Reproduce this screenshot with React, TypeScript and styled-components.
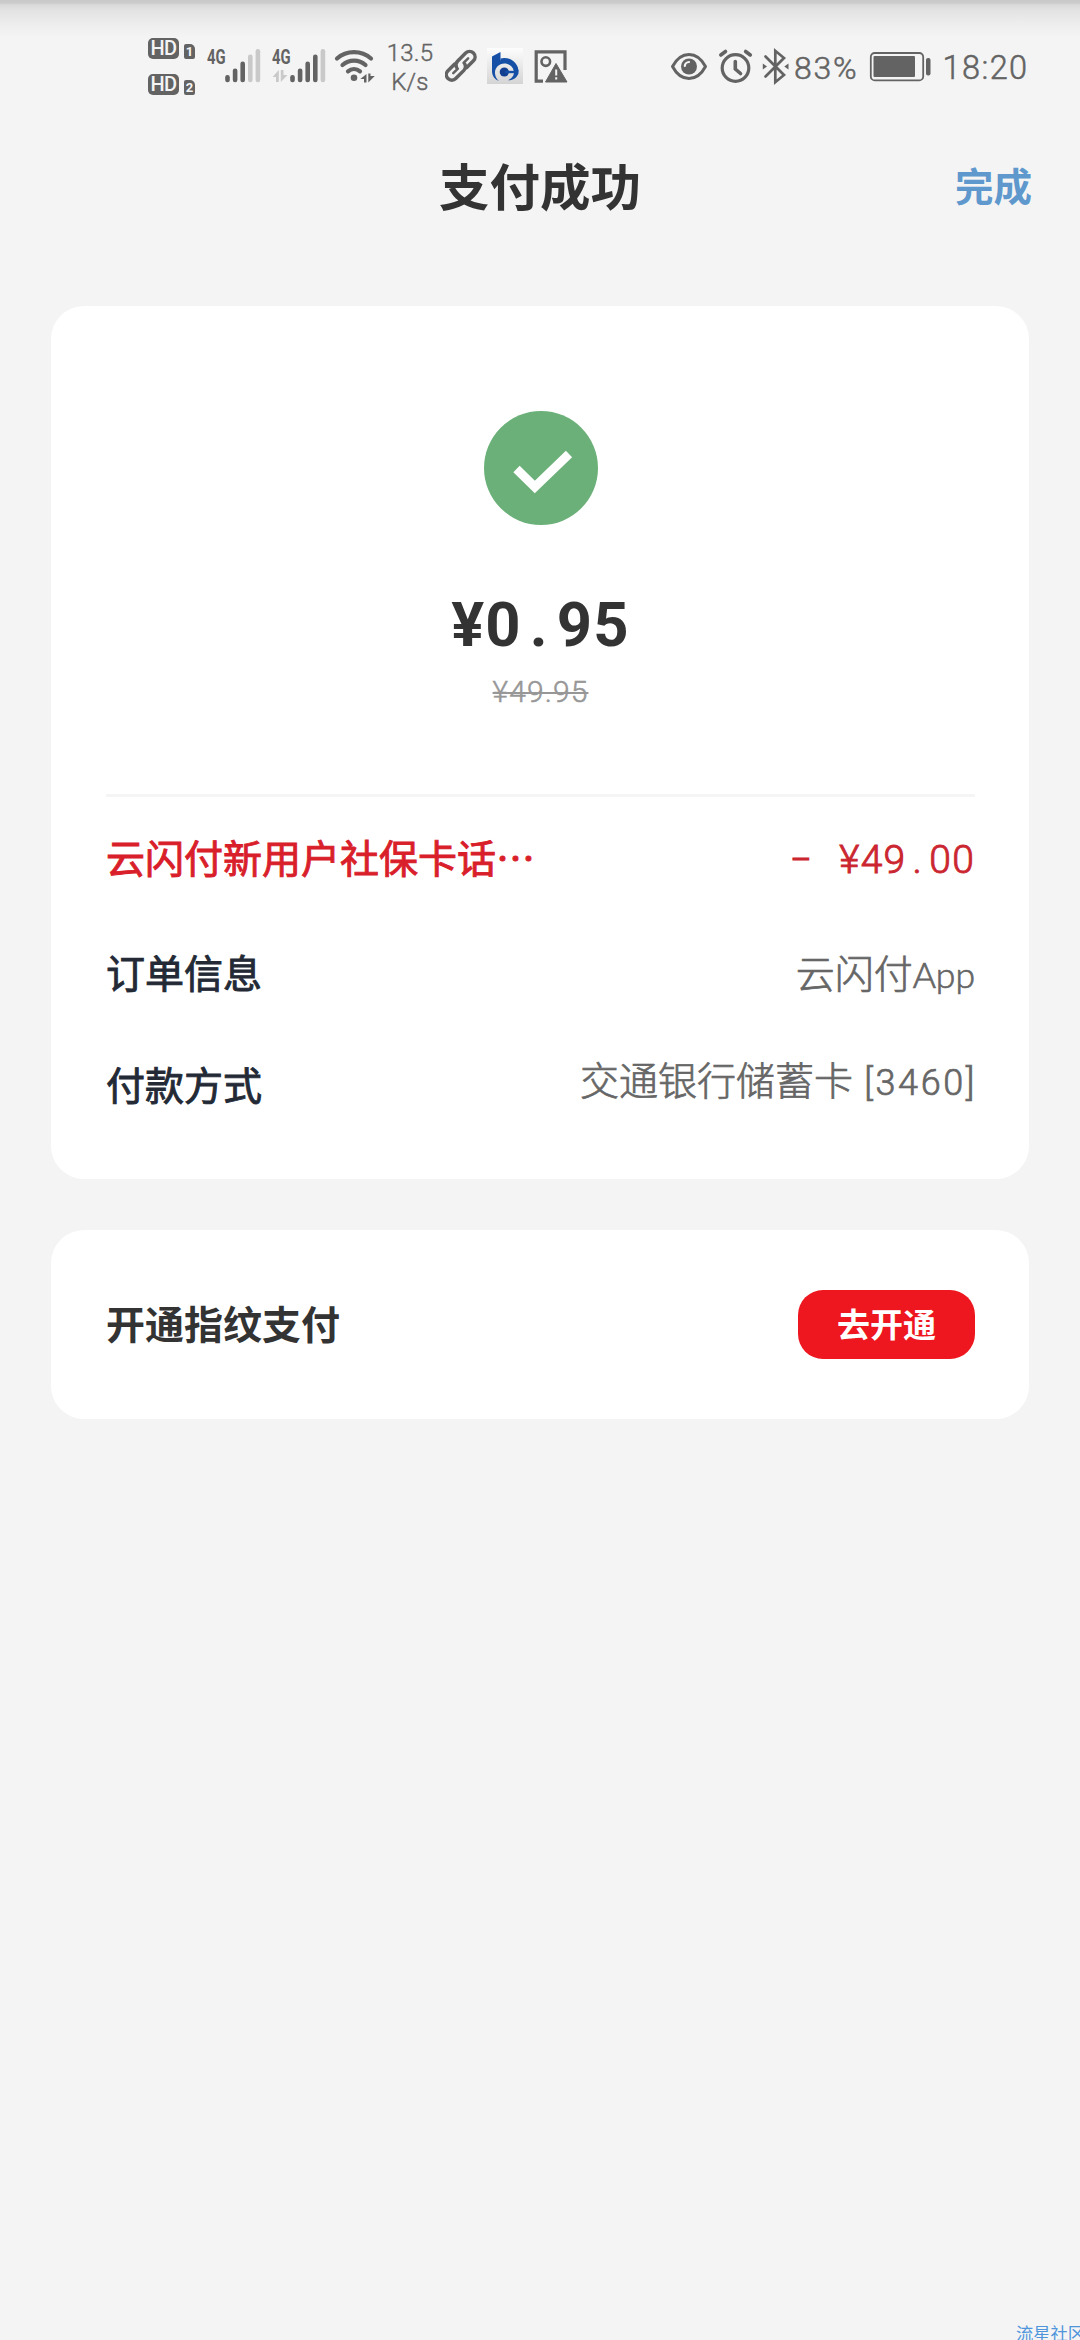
import React from "react";
import styled, { createGlobalStyle } from "styled-components";

const INK = "#636363";
const FAINT = "#c9c9c9";

const GlobalStyle = createGlobalStyle`
  * { box-sizing: border-box; }
  body {
    margin: 0;
    background: #f4f4f4;
    font-family: "Noto Sans CJK SC", "Noto Sans", sans-serif;
  }
`;

const Page = styled.div`
  display: flex;
  flex-direction: column;
  width: 1080px;
  height: 2340px;
  overflow: hidden;
  background: #f4f4f4;
`;

/* ---------- status bar ---------- */

const StatusBar = styled.div`
  display: flex;
  flex: none;
  height: 110px;
  padding-left: 148px;
  color: ${INK};
  font-family: Roboto, sans-serif;
  background: linear-gradient(
    #c9c9c9 0px, #cccccc 3px, #dadada 5px, #e3e3e3 11px, #e9e9e9 18px, #efefef 27px, #f4f4f4 37px
  );
`;

const HdStack = styled.div`
  display: flex;
  flex-direction: column;
  gap: 15px;
  padding-top: 38px;
`;

const HdRow = styled.div`
  display: flex;
  align-items: flex-end;
  gap: 5px;
  height: 21px;
`;

const HdBadge = styled.span`
  width: 31px;
  height: 21px;
  border-radius: 5px;
  background: ${INK};
  color: #f4f4f4;
  font: 500 20px/21px Roboto, sans-serif;
  letter-spacing: -0.6px;
  text-align: center;
`;

const SimBadge = styled.span`
  width: 11px;
  height: 15px;
  border-radius: 2px 5px 2px 2px;
  background: ${INK};
  color: #f4f4f4;
  font: 700 13px/16px Roboto, sans-serif;
  text-align: center;
`;

const Signal = styled.div<{ $left: number }>`
  display: flex;
  margin-left: ${(p) => p.$left}px;
`;

const Network = styled.div`
  width: 18px;
  padding-top: 47px;
`;

const NetworkLabel = styled.div`
  width: 24px;
  height: 20px;
  font: 700 20px/20px Roboto, sans-serif;
  transform: scaleX(0.74);
  transform-origin: left;
`;

const DataArrows = styled.svg`
  display: block;
  margin-top: 2px;
`;

const Speed = styled.div`
  display: flex;
  flex-direction: column;
  align-items: center;
  width: 48px;
  margin-left: 9px;
  padding-top: 39px;
  font-size: 24px;
  font-weight: 300;
  line-height: 28.5px;
  letter-spacing: 0.2px;
  -webkit-text-stroke: 0.4px ${INK};
`;

const StatusText = styled.span<{ $left: number; $size: number; $spacing: number }>`
  margin-left: ${(p) => p.$left}px;
  font-weight: 300;
  font-size: ${(p) => p.$size}px;
  letter-spacing: ${(p) => p.$spacing}px;
  line-height: 137px;
  white-space: nowrap;
  -webkit-text-stroke: 0.5px ${INK};
`;

const Glyph = styled.svg<{ $left?: number }>`
  display: block;
  flex: none;
  margin-left: ${(p) => p.$left ?? 0}px;
`;

/* Every status glyph is a full-height slice of the 110px bar. */
function StatusGlyph({
  x,
  w,
  left,
  children,
}: {
  x: number;
  w: number;
  left?: number;
  children: React.ReactNode;
}) {
  return (
    <Glyph $left={left} width={w} height={110} viewBox={`${x} 0 ${w} 110`} fill="none">
      {children}
    </Glyph>
  );
}

function Bars({ x, lit }: { x: number; lit: number }) {
  const tops = [75, 68.5, 61.5, 54.5, 49];
  return (
    <StatusGlyph x={x} w={36}>
      {tops.map((top, i) => (
        <rect
          key={top}
          x={x + 0.2 + i * 7.6}
          y={top}
          width={4.6}
          height={82.2 - top}
          rx={2.2}
          fill={i < lit ? INK : FAINT}
        />
      ))}
    </StatusGlyph>
  );
}

/* ---------- header ---------- */

const Header = styled.header`
  display: grid;
  grid-template-columns: 1fr auto 1fr;
  align-items: center;
  flex: none;
  height: 147px;
  padding: 0 48px;
`;

const Title = styled.h1`
  grid-column: 2;
  margin: 0;
  color: #333;
  font-size: 50.5px;
  font-weight: 700;
  line-height: 72px;
`;

const Done = styled.a`
  justify-self: end;
  color: #5f98cd;
  font-size: 38.5px;
  font-weight: 700;
  line-height: 56px;
`;

/* ---------- cards ---------- */

const Cards = styled.main`
  display: flex;
  flex-direction: column;
  gap: 51px;
  margin-top: 49px;
  padding: 0 51px;
`;

const Receipt = styled.section`
  display: flex;
  flex-direction: column;
  height: 873px;
  padding: 0 54px 0 55px;
  border-radius: 33px;
  background: #fff;
`;

const Summary = styled.div`
  display: flex;
  flex-direction: column;
  align-items: center;
  height: 491px;
  padding-top: 105px;
  border-bottom: 3px solid #f5f5f5;
  font-family: Roboto, sans-serif;
`;

const Amount = styled.div`
  margin-top: 64px;
  color: #333;
  font-size: 61.5px;
  font-weight: 700;
  line-height: 72px;
  letter-spacing: 1.2px;
`;

const Dot = styled.span<{ $width: number }>`
  display: inline-block;
  width: ${(p) => p.$width}px;
  text-align: center;
`;

const Original = styled.div`
  margin-top: 13px;
  color: #979797;
  font-size: 30px;
  font-weight: 300;
  line-height: 36px;
  letter-spacing: 1.1px;
  text-decoration: line-through;
  text-decoration-thickness: 2px;
  -webkit-text-stroke: 0.5px #979797;
`;

const Row = styled.div<{ $height: number }>`
  display: flex;
  align-items: center;
  justify-content: space-between;
  height: ${(p) => p.$height}px;
`;

const Label = styled.span<{ $color: string }>`
  margin-bottom: 5px;
  color: ${(p) => p.$color};
  font-size: 39px;
  line-height: 56px;
  -webkit-text-stroke: 0.9px ${(p) => p.$color};
`;

const Value = styled.span<{ $lift?: number }>`
  margin-bottom: ${(p) => p.$lift ?? 0}px;
  color: #666;
  font-size: 39px;
  font-weight: 300;
  line-height: 56px;
  white-space: pre;
  -webkit-text-stroke: 0.7px #666;
`;

const Latin = styled.span`
  font-family: Lato, sans-serif;
  font-size: 35.5px;
  font-weight: 300;
`;

const CardNumber = styled.span`
  margin-right: -2px;
  font-family: Roboto, sans-serif;
  font-size: 36px;
  letter-spacing: 2.6px;
`;

const Discount = styled.span`
  display: flex;
  align-items: center;
  margin-top: 3px;
  color: #cb2630;
  font-family: Roboto, sans-serif;
  font-size: 39px;
  font-weight: 300;
  line-height: 56px;
  letter-spacing: 1.2px;
  -webkit-text-stroke: 0.9px #cb2630;
`;

const Minus = styled.span`
  margin-right: 26px;
`;

const Fingerprint = styled.section`
  display: flex;
  align-items: center;
  justify-content: space-between;
  height: 189px;
  padding: 0 54px 0 55px;
  border-radius: 33px;
  background: #fff;
`;

const Prompt = styled.span`
  margin-bottom: 6px;
  color: #333;
  font-size: 39px;
  font-weight: 700;
  line-height: 56px;
`;

const OpenButton = styled.button`
  width: 177px;
  height: 69px;
  padding: 0 0 3px;
  border: 0;
  border-radius: 25px;
  background: #ee161f;
  color: #fff;
  font: 700 33px/66px "Noto Sans CJK SC", sans-serif;
`;

const Watermark = styled.div`
  align-self: flex-end;
  flex: none;
  width: 64px;
  height: 18px;
  margin-top: auto;
  color: #4f95dc;
  font-size: 17.3px;
  line-height: 21px;
  white-space: nowrap;
`;

export default function App() {
  return (
    <Page>
      <GlobalStyle />
      <StatusBar>
        <HdStack>
          {[1, 2].map((n) => (
            <HdRow key={n}>
              <HdBadge>HD</HdBadge>
              <SimBadge>{n}</SimBadge>
            </HdRow>
          ))}
        </HdStack>

        <Signal $left={12}>
          <Network>
            <NetworkLabel>4G</NetworkLabel>
          </Network>
          <Bars x={225} lit={3} />
        </Signal>

        <Signal $left={11}>
          <Network>
            <NetworkLabel>4G</NetworkLabel>
            <DataArrows width="16" height="14" viewBox="0 0 16 14" fill={FAINT}>
              <path d="M6.800 1V13H4V8H.5ZM8.800 1H11.500V6H15.500L8.800 13Z" />
            </DataArrows>
          </Network>
          <Bars x={290} lit={4} />
        </Signal>

        <StatusGlyph x={334} w={43} left={8}>
          <g stroke={INK} strokeWidth="4.200" strokeLinecap="round">
            <path d="M337 58.500c9.500-8.500 24.500-8.500 34 0" />
            <path d="M342.500 65c6.500-5.800 16.500-5.800 23 0" />
            <path d="M348 71.300c3.500-3 8.500-3 12 0" />
          </g>
          <circle cx="354" cy="77.800" r="3.300" fill={INK} />
          <path d="M366.500 74V82.500H364V79H360.300ZM368.300 73.500H370.500V76H374.800L368.300 82.500Z" fill={INK} />
        </StatusGlyph>

        <Speed>
          <span>13.5</span>
          <span>K/s</span>
        </Speed>

        <StatusGlyph x={445} w={32} left={11}>
          <g
            transform="translate(460.700 65.800) rotate(-45)"
            stroke={INK}
            strokeWidth="3.500"
            strokeLinecap="round"
          >
            <path d="M-3 -5.500H-12.500A5.500 5.500 0 0 0 -12.500 5.500H-1A5.500 5.500 0 0 0 4 2" />
            <path d="M3 5.500H12.500A5.500 5.500 0 0 0 12.500 -5.500H1A5.500 5.500 0 0 0 -4 -2" />
            <path d="M-10.500 0H-4M4 0H10.500" strokeWidth="2.500" />
          </g>
        </StatusGlyph>

        <StatusGlyph x={487} w={36} left={10}>
          <defs>
            <linearGradient id="bankTile" x1="0" y1="0" x2="0" y2="1">
              <stop offset="0" stopColor="#fdfdfd" />
              <stop offset="1" stopColor="#d4d4d4" />
            </linearGradient>
          </defs>
          <rect x="487" y="48" width="36" height="36" fill="url(#bankTile)" />
          <path
            d="M492 56.500L500.500 52V60.500C507 57.500 517.500 61.500 518.500 71H514C513 66 508.500 63.500 504.500 63.500C498.500 63.500 494.500 68.500 495 73.500C495.300 77 497 79.500 499 81C494.500 79.500 492 75.500 492 71Z"
            fill="#1550a6"
          />
          <path d="M500.500 58.500C507 56.500 518 60 518.500 71.500H514C513.500 64 507 60.500 500.500 62Z" fill="#1550a6" />
          <circle cx="504.300" cy="72" r="4.600" fill="#123f8f" />
          <path d="M505 70.800H518.500V73.200H505Z" fill="#1550a6" />
          <path d="M514 73H518.500C517.500 77 514 80.300 508 80.300C511 79 513.500 76.500 514 73Z" fill="#1550a6" />
        </StatusGlyph>

        <StatusGlyph x={534} w={34} left={11}>
          <path d="M543 81.200H536.200V51.800H565V70" stroke={INK} strokeWidth="3.200" />
          <circle cx="545.800" cy="61.600" r="4.300" stroke={INK} strokeWidth="2.600" />
          <path d="M556 63.500L567 82H545.500Z" fill={INK} stroke={INK} strokeWidth="1" strokeLinejoin="round" />
          <path d="M556.200 69.500V75.500M556.200 77.300V79.600" stroke="#f4f4f4" strokeWidth="2" />
        </StatusGlyph>

        <StatusGlyph x={670} w={38} left={102}>
          <path
            d="M672.500 66.500C681 50.500 697 50.500 705.500 66.500C697 82.500 681 82.500 672.500 66.500Z"
            stroke={INK}
            strokeWidth="3"
            strokeLinejoin="round"
          />
          <circle cx="689" cy="66.500" r="8" fill={INK} />
          <path d="M684.800 66A4.300 4.300 0 0 1 689 62" stroke="#f4f4f4" strokeWidth="2.200" strokeLinecap="round" />
        </StatusGlyph>

        <StatusGlyph x={718} w={35} left={10}>
          <circle cx="735.500" cy="68" r="13.300" stroke={INK} strokeWidth="3.200" />
          <path
            d="M735.300 61.500V69L740.500 73.500M720.800 55L725.500 51.500M750.300 55L745.600 51.500"
            stroke={INK}
            strokeWidth="3.600"
            strokeLinecap="round"
          />
        </StatusGlyph>

        <StatusGlyph x={761} w={29} left={8}>
          <path
            d="M765.500 56.500L784 75L775.300 82.200V50.800L784 58L765.500 76.500"
            stroke={INK}
            strokeWidth="2.700"
            strokeLinecap="round"
            strokeLinejoin="miter"
          />
          <path d="M762.800 63.500L767 66.500L762.800 69.500ZM788.500 63.500L784.300 66.500L788.500 69.500Z" fill={INK} />
        </StatusGlyph>

        <StatusText $left={4} $size={32} $spacing={1.8}>
          83%
        </StatusText>

        <StatusGlyph x={869} w={62} left={10}>
          <rect x="870.800" y="53" width="52.400" height="27.400" rx="4" stroke={INK} strokeWidth="1.800" />
          <rect x="873.500" y="56" width="41.500" height="21" rx="1" fill={INK} />
          <rect x="926" y="58" width="4.500" height="17.500" rx="2" fill={INK} />
        </StatusGlyph>

        <StatusText $left={12} $size={32.5} $spacing={1.4}>
          18:20
        </StatusText>
      </StatusBar>

      <Header>
        <Title>支付成功</Title>
        <Done>完成</Done>
      </Header>

      <Cards>
        <Receipt>
          <Summary>
            <svg width="114" height="114" viewBox="0 0 114 114">
              <circle cx="57" cy="57" r="57" fill="#6ab078" />
              <path d="M32.500 58L50.800 76L85 43" fill="none" stroke="#fff" strokeWidth="9" />
            </svg>
            <Amount>
              ¥0<Dot $width={35}>.</Dot>95
            </Amount>
            <Original>¥49.95</Original>
          </Summary>
          <Row $height={122}>
            <Label $color="#d9202a">云闪付新用户社保卡话…</Label>
            <Discount>
              <Minus>−</Minus>¥49<Dot $width={23}>.</Dot>00
            </Discount>
          </Row>
          <Row $height={108}>
            <Label $color="#232a36">订单信息</Label>
            <Value>
              云闪付<Latin>App</Latin>
            </Value>
          </Row>
          <Row $height={116}>
            <Label $color="#232a36">付款方式</Label>
            <Value $lift={9}>
              交通银行储蓄卡<CardNumber> [3460]</CardNumber>
            </Value>
          </Row>
        </Receipt>

        <Fingerprint>
          <Prompt>开通指纹支付</Prompt>
          <OpenButton>去开通</OpenButton>
        </Fingerprint>
      </Cards>

      <Watermark>流星社区</Watermark>
    </Page>
  );
}
